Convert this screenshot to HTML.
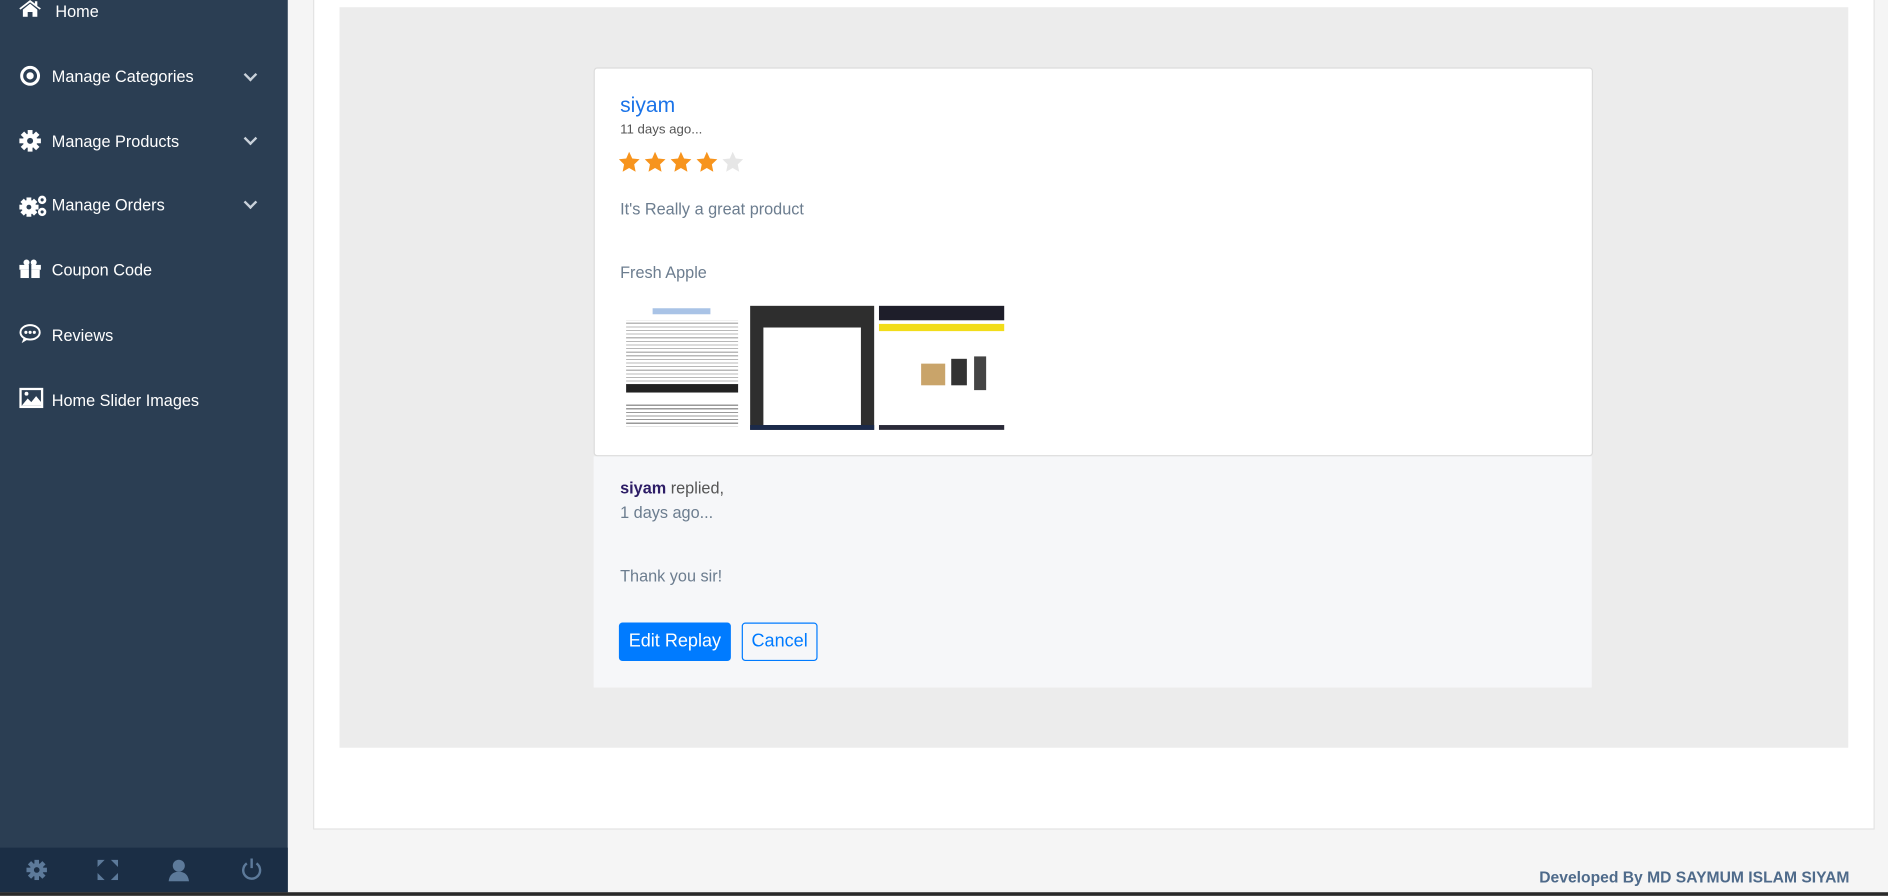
<!DOCTYPE html>
<html><head><meta charset="utf-8"><style>
html,body{margin:0;padding:0;width:1888px;height:896px;overflow:hidden;background:#f5f5f5;font-family:"Liberation Sans",Arial,sans-serif}
#w{position:absolute;left:0;top:0;width:1568px;height:744px;transform:scale(1.20408);transform-origin:0 0;background:#f5f5f5}
.a{position:absolute}
#sb{left:0;top:0;width:239px;height:741px;background:#2b3e53}
#bb{left:0;top:704px;width:239px;height:37px;background:#1b2e45}
.mi{position:absolute;left:43px;color:#fff;font-size:13.5px;line-height:16px}
.ic{position:absolute;left:16px}
.ch{position:absolute;left:204px;width:6px;height:6px;border-right:2px solid #c9d1da;border-bottom:2px solid #c9d1da;transform:rotate(45deg)}
.txt{color:#6c7d8f;font-size:13.5px}
</style></head><body><div id="w">
<div class="a" id="sb"></div>
<div class="a" id="bb"></div>
<div class="a" style="left:0;top:741px;width:1568px;height:3px;background:#2a2a2a"></div>

<svg class="ic" style="top:0" width="18" height="14" viewBox="0 0 18 14"><path d="M9 0L0 7l1 1 8-6 8 6 1-1-3-2V1h-2v2z M3 8v6h4v-4h4v4h4V8L9 3z" fill="#fff"/></svg>
<div class="mi" style="left:46px;top:2px">Home</div>

<svg class="ic" style="top:54px" width="18" height="18"><circle cx="9" cy="9" r="7" fill="none" stroke="#fff" stroke-width="2.5"/><circle cx="9" cy="9" r="3" fill="#fff"/></svg>
<div class="mi" style="top:56px">Manage Categories</div><div class="ch" style="top:58px"></div>

<svg class="ic" style="top:108px" width="18" height="18" viewBox="0 0 18 18"><g fill="#fff"><circle cx="9" cy="9" r="6"/><rect x="7" y="0" width="4" height="18"/><rect x="0" y="7" width="18" height="4"/><rect x="7" y="0" width="4" height="18" transform="rotate(45 9 9)"/><rect x="7" y="0" width="4" height="18" transform="rotate(-45 9 9)"/></g><circle cx="9" cy="9" r="2.5" fill="#2b3e53"/></svg>
<div class="mi" style="top:110px">Manage Products</div><div class="ch" style="top:111px"></div>

<svg class="ic" style="top:161px" width="26" height="20" viewBox="0 0 26 20"><g fill="#fff"><circle cx="8" cy="11" r="6"/><rect x="6" y="3" width="4" height="16"/><rect x="0" y="9" width="16" height="4"/><rect x="6" y="3" width="4" height="16" transform="rotate(45 8 11)"/><rect x="6" y="3" width="4" height="16" transform="rotate(-45 8 11)"/><circle cx="19" cy="5" r="3.5"/><circle cx="19" cy="15" r="3.5"/></g><circle cx="8" cy="11" r="2" fill="#2b3e53"/><circle cx="19" cy="5" r="1.3" fill="#2b3e53"/><circle cx="19" cy="15" r="1.3" fill="#2b3e53"/></svg>
<div class="mi" style="top:163px">Manage Orders</div><div class="ch" style="top:164px"></div>

<svg class="ic" style="top:215px" width="18" height="16"><g fill="#fff"><rect x="0" y="5" width="18" height="4"/><rect x="1" y="9" width="16" height="7"/><circle cx="6" cy="3" r="2.5"/><circle cx="12" cy="3" r="2.5"/></g><rect x="8" y="5" width="2" height="11" fill="#2b3e53"/></svg>
<div class="mi" style="top:217px">Coupon Code</div>

<svg class="ic" style="top:269px" width="18" height="17"><ellipse cx="9" cy="7" rx="8" ry="6" fill="none" stroke="#fff" stroke-width="1.6"/><path d="M4 11l-2 5 5-3" fill="#fff"/><circle cx="5.5" cy="7" r="1.3" fill="#fff"/><circle cx="9" cy="7" r="1.3" fill="#fff"/><circle cx="12.5" cy="7" r="1.3" fill="#fff"/></svg>
<div class="mi" style="top:271px">Reviews</div>

<svg class="ic" style="top:322px" width="20" height="17"><rect x="1" y="1" width="18" height="15" fill="none" stroke="#fff" stroke-width="2"/><path d="M2 15l5-6 3 3 4-5 5 6v2z" fill="#fff"/><circle cx="6" cy="5" r="1.6" fill="#fff"/></svg>
<div class="mi" style="top:325px">Home Slider Images</div>

<svg class="a" style="left:22px;top:714px" width="17" height="17" viewBox="0 0 18 18"><g fill="#5d7a9a"><circle cx="9" cy="9" r="6"/><rect x="7" y="0" width="4" height="18"/><rect x="0" y="7" width="18" height="4"/><rect x="7" y="0" width="4" height="18" transform="rotate(45 9 9)"/><rect x="7" y="0" width="4" height="18" transform="rotate(-45 9 9)"/></g><circle cx="9" cy="9" r="2.5" fill="#1b2e45"/></svg>
<svg class="a" style="left:81px;top:714px" width="17" height="17"><g fill="#5d7a9a"><path d="M0 0h6L0 6z M17 0h-6l6 6z M0 17h6L0 11z M17 17h-6l6-6z"/></g></svg>
<svg class="a" style="left:140px;top:713px" width="17" height="19"><circle cx="8.5" cy="6" r="5" fill="#5d7a9a"/><path d="M0 19q1-8 8.5-8t8.5 8z" fill="#5d7a9a"/></svg>
<svg class="a" style="left:200px;top:713px" width="18" height="19"><path d="M5 4a7 7 0 1 0 8 0" fill="none" stroke="#5d7a9a" stroke-width="2"/><line x1="9" y1="0" x2="9" y2="8" stroke="#5d7a9a" stroke-width="2"/></svg>

<div class="a" style="left:260px;top:-1px;width:1295px;height:688px;background:#fff;border:1px solid #e3e3e3"></div>
<div class="a" style="left:282px;top:6px;width:1253px;height:615px;background:#ececec"></div>
<div class="a" style="left:493px;top:56px;width:828px;height:321px;background:#fff;border:1px solid #dcdcdc;border-radius:3px"></div>
<div class="a" style="left:493px;top:379px;width:829px;height:192px;background:#f6f7f9"></div>

<div class="a" style="left:515px;top:77px;color:#1a73e8;font-size:17.5px">siyam</div>
<div class="a" style="left:515px;top:102px;color:#555;font-size:11px">11 days ago...</div>
<svg class="a" style="left:514px;top:126px" width="110" height="18" viewBox="0 0 110 18">
<defs><path id="s" d="M8.5 0l2.6 5.6 6.1.7-4.5 4.2 1.2 6.1-5.4-3.1-5.4 3.1 1.2-6.1L0 6.3l6.1-.7z"/></defs>
<use href="#s" x="0" fill="#f7941d"/><use href="#s" x="21.5" fill="#f7941d"/><use href="#s" x="43" fill="#f7941d"/><use href="#s" x="64.5" fill="#f7941d"/><use href="#s" x="86" fill="#e6e6e6"/></svg>
<div class="a txt" style="left:515px;top:166px">It's Really a great product</div>
<div class="a txt" style="left:515px;top:219px">Fresh Apple</div>

<div class="a" style="left:517px;top:254px;width:99px;height:103px;background:#fff">
<div class="a" style="left:25px;top:2px;width:48px;height:5px;background:#a9c3e6"></div>
<div class="a" style="left:3px;top:12px;width:93px;height:55px;background:repeating-linear-gradient(#fff 0 2px,#b8b8b8 2px 3px)"></div>
<div class="a" style="left:3px;top:65px;width:93px;height:7px;background:#222"></div>
<div class="a" style="left:3px;top:80px;width:93px;height:20px;background:repeating-linear-gradient(#fff 0 2px,#999 2px 3px)"></div></div>
<div class="a" style="left:623px;top:254px;width:103px;height:103px;background:#2e2e2e">
<div class="a" style="left:11px;top:18px;width:81px;height:81px;background:#fff"></div>
<div class="a" style="left:0;top:99px;width:103px;height:4px;background:#1b2a4a"></div></div>
<div class="a" style="left:730px;top:254px;width:104px;height:103px;background:#fff;border-top:12px solid #1e1e2a;box-sizing:border-box">
<div class="a" style="left:0;top:3px;width:104px;height:6px;background:#f2dd1a"></div>
<div class="a" style="left:35px;top:36px;width:20px;height:18px;background:#c9a46a"></div>
<div class="a" style="left:60px;top:32px;width:13px;height:22px;background:#333"></div>
<div class="a" style="left:79px;top:30px;width:10px;height:28px;background:#444"></div>
<div class="a" style="left:0;top:87px;width:104px;height:4px;background:#2a2a38"></div></div>

<div class="a" style="left:515px;top:398px;font-size:13.5px;color:#555"><b style="color:#2d1d66">siyam</b> replied,</div>
<div class="a txt" style="left:515px;top:418px">1 days ago...</div>
<div class="a txt" style="left:515px;top:471px">Thank you sir!</div>
<div class="a" style="left:514px;top:517px;width:93px;height:32px;background:#007bff;border-radius:3px;color:#fff;font-size:15px;line-height:32px;text-align:center">Edit Replay</div>
<div class="a" style="left:616px;top:517px;width:61px;height:30px;border:1px solid #007bff;border-radius:3px;color:#007bff;font-size:15px;line-height:30px;text-align:center">Cancel</div>

<div class="a" style="right:32px;top:721px;color:#4e6a8a;font-size:13px;font-weight:bold">Developed By MD SAYMUM ISLAM SIYAM</div>
</div></body></html>
